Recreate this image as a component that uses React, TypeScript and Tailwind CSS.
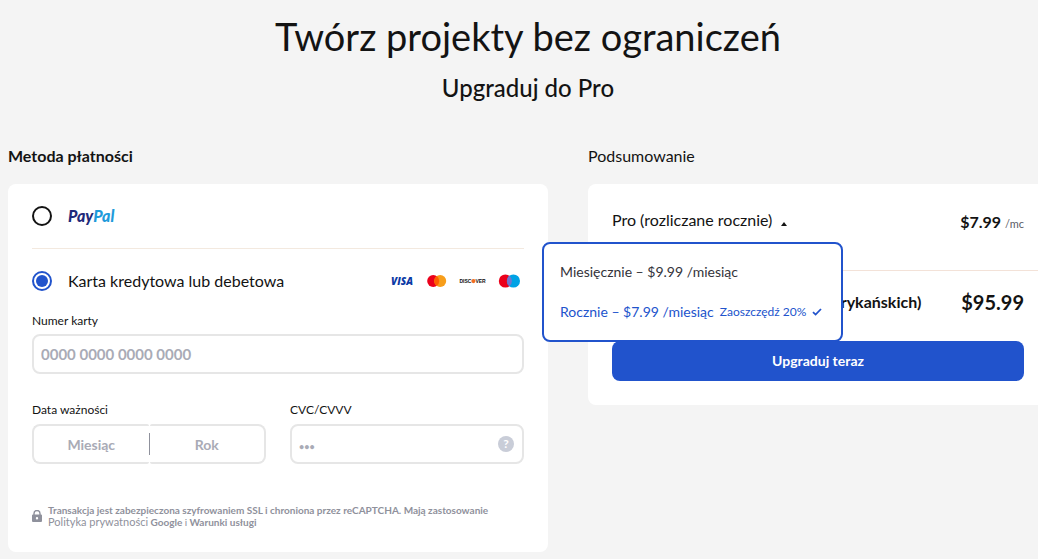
import React, { useState } from 'react';
import clsx from 'clsx';

type PlanId = 'monthly' | 'yearly';

interface Plan {
  id: PlanId;
  label: string;
  summary: string;
  price: string;
  total: string;
  saving?: string;
}

const PLANS: Plan[] = [
  { id: 'monthly', label: 'Miesięcznie – $9.99 /miesiąc', summary: 'Pro (rozliczane miesięcznie)', price: '$9.99', total: '$9.99' },
  { id: 'yearly', label: 'Rocznie – $7.99 /miesiąc', summary: 'Pro (rozliczane rocznie)', price: '$7.99', total: '$95.99', saving: 'Zaoszczędź 20%' },
];

const fieldClass =
  'h-10 w-full min-w-0 border-2 border-[#e6e6e6] bg-white font-bold text-[#131313] outline-none placeholder:text-[#a9abb6] placeholder:opacity-100 focus:border-[#2153cc]';
const radioClass =
  'grid size-5 shrink-0 appearance-none place-content-center rounded-full border-2 border-[#131313] bg-white checked:border-[#2153cc] checked:before:size-3 checked:before:rounded-full checked:before:bg-[#2153cc]';

const CardLogos = () => (
  <div className="flex items-center gap-3">
    <svg width="24" height="14" viewBox="0 0 24 14" role="img" aria-label="Visa">
      <text x="0" y="11" fontFamily="Open Sans, sans-serif" fontWeight="800" fontStyle="italic" fontSize="10" fill="#0b3aa5">VISA</text>
    </svg>
    <svg width="20" height="14" viewBox="0 0 20 14" role="img" aria-label="Mastercard">
      <circle cx="6.2" cy="7" r="6" fill="#eb001b" />
      <circle cx="13.2" cy="7" r="6" fill="#f79e1b" />
      <path d="M9.7 2.1a6 6 0 0 1 0 9.8a6 6 0 0 1 0-9.8z" fill="#ff5f00" />
    </svg>
    <svg width="27" height="14" viewBox="0 0 27 14" role="img" aria-label="Discover">
      <text x="0.5" y="9" fontFamily="Liberation Sans, sans-serif" fontWeight="700" fontSize="5" fill="#111">DISC</text>
      <circle cx="14.4" cy="7.1" r="2.1" fill="#f26e21" />
      <text x="16.4" y="9" fontFamily="Liberation Sans, sans-serif" fontWeight="700" fontSize="5" fill="#111">VER</text>
    </svg>
    <svg width="22" height="14" viewBox="0 0 22 14" role="img" aria-label="Maestro">
      <circle cx="7.4" cy="7" r="6.600" fill="#eb001b" />
      <circle cx="15.4" cy="7" r="6.600" fill="#00a2e5" />
      <path d="M11.4 1.800a6.600 6.600 0 0 1 0 10.400a6.600 6.600 0 0 1 0-10.400z" fill="#7375cf" />
    </svg>
  </div>
);

const PaymentMethod = () => {
  const [method, setMethod] = useState<'paypal' | 'card'>('card');

  return (
    <div className="rounded-lg bg-white px-6 pt-5 pb-6">
      <label className="flex h-6 items-center gap-4">
        <input type="radio" name="method" className={radioClass} checked={method === 'paypal'} onChange={() => setMethod('paypal')} />
        <span className="text-base font-black text-[#1f2a7a] italic">
          Pay<span className="text-[#1f9bdb]">Pal</span>
        </span>
      </label>

      <div className="mt-5 flex items-center justify-between border-t border-[#f3e9df] pt-5 pr-1">
        <label className="flex h-6 items-center gap-4 text-base">
          <input type="radio" name="method" className={radioClass} checked={method === 'card'} onChange={() => setMethod('card')} />
          Karta kredytowa lub debetowa
        </label>
        <CardLogos />
      </div>

      <label htmlFor="card-number" className="mt-4 block text-xs leading-6">Numer karty</label>
      <input id="card-number" className={clsx(fieldClass, 'mt-px rounded-lg px-[7px] text-[15px]')} placeholder="0000 0000 0000 0000" />

      <div className="mt-6 grid grid-cols-2 gap-6">
        <fieldset>
          <legend className="text-xs leading-6">Data ważności</legend>
          <div className="mt-0.5 flex items-center">
            <input aria-label="Miesiąc" className={clsx(fieldClass, 'rounded-l-lg rounded-r-xs border-r-0 text-center text-sm')} placeholder="Miesiąc" />
            <span className="h-[22px] w-px shrink-0 bg-[#8f919c]" />
            <input aria-label="Rok" className={clsx(fieldClass, 'rounded-l-xs rounded-r-lg border-l-0 text-center text-sm')} placeholder="Rok" />
          </div>
        </fieldset>
        <div>
          <label htmlFor="cvc" className="block text-xs leading-6">CVC/CVVV</label>
          <div className="relative mt-0.5">
            <input id="cvc" className={clsx(fieldClass, 'rounded-lg px-[7px] text-sm placeholder:text-[9px]')} placeholder="•••" />
            <button type="button" aria-label="Pomoc CVC" className="absolute inset-y-3 right-[10px] size-4 rounded-full bg-[#c9cdd8] text-xs leading-4 font-bold text-white">
              ?
            </button>
          </div>
        </div>
      </div>

      <div className="mt-10 flex items-center gap-[6px] text-[10px] leading-3 font-bold text-[#8f919c]">
        <svg width="10" height="12" viewBox="0 0 10 12" className="shrink-0" aria-hidden="true">
          <path d="M2 5V3.500a3 3 0 0 1 6 0V5" fill="none" stroke="#8f919c" strokeWidth="1.400" />
          <path fillRule="evenodd" d="M1 4.600h8a1 1 0 0 1 1 1V11a1 1 0 0 1-1 1H1a1 1 0 0 1-1-1V5.600a1 1 0 0 1 1-1zM5 7a1.200 1.200 0 1 0 0 2.400A1.200 1.200 0 0 0 5 7z" fill="#8f919c" />
        </svg>
        <p>
          Transakcja jest zabezpieczona szyfrowaniem SSL i chroniona przez reCAPTCHA. Mają zastosowanie{' '}
          <a href="#privacy" className="text-[11px] font-normal">Polityka prywatności</a> Google <span className="font-normal">i</span>{' '}
          <a href="#terms">Warunki usługi</a>
        </p>
      </div>
    </div>
  );
};

const Summary = () => {
  const [planId, setPlanId] = useState<PlanId>('yearly');
  const [open, setOpen] = useState(true);
  const plan = PLANS.find((p) => p.id === planId)!;

  return (
    <div className="rounded-lg bg-white p-6">
      <div className="relative flex h-[62px] items-start justify-between">
        <button type="button" aria-expanded={open} className="flex items-baseline gap-[9px] text-base leading-6" onClick={() => setOpen(!open)}>
          {plan.summary}
          <svg width="6" height="4" viewBox="0 0 6 4" className={clsx(!open && 'rotate-180')} aria-hidden="true">
            <path d="M3 0l3 4H0z" fill="#131313" />
          </svg>
        </button>
        <p className="text-base leading-7 font-bold">
          {plan.price} <span className="text-[11px] font-normal text-[#5c5c66]">/mc</span>
        </p>

        {/* Plan menu */}
        {open && (
          <div role="listbox" aria-label="Plan" className="absolute top-[34px] -left-[70px] z-10 flex w-[301px] flex-col rounded-lg border-2 border-[#2153cc] bg-white py-2">
            {PLANS.map((p) => (
              <button
                key={p.id}
                type="button"
                role="option"
                aria-selected={p.id === planId}
                className={clsx('flex h-10 items-center px-4 text-sm whitespace-nowrap', p.id === planId ? 'text-[#2153cc]' : 'text-[#33333a]')}
                onClick={() => {
                  setPlanId(p.id);
                  setOpen(false);
                }}
              >
                {p.label}
                {p.saving && <span className="ml-[6px] text-xs">{p.saving}</span>}
                {p.id === planId && (
                  <svg width="10" height="8" viewBox="0 0 10 8" className="ml-[6px]" aria-hidden="true">
                    <path d="M1 4.200l2.600 2.400L9 1" fill="none" stroke="#2153cc" strokeWidth="1.800" />
                  </svg>
                )}
              </button>
            ))}
          </div>
        )}
      </div>

      <div className="-mr-6 border-t border-[#f3e2d8]" />
      <div className="flex h-[70px] items-center justify-between pb-2">
        <p className="text-base font-bold">Cena całkowita (w dolarach amerykańskich)</p>
        <p className="text-xl font-bold">{plan.total}</p>
      </div>
      <button type="button" className="h-10 w-full rounded-lg bg-[#2153cc] text-sm font-bold text-white">Upgraduj teraz</button>
    </div>
  );
};

export default function App() {
  return (
    <div className="min-h-screen overflow-x-clip bg-[#f4f4f4] pb-2 font-['Lato',sans-serif] text-[#131313]">
      <main className="-mr-[10px] ml-2">
        <header className="pt-3 text-center">
          <h1 className="text-[38px] leading-12">Twórz projekty bez ograniczeń</h1>
          <p className="mt-3 text-2xl leading-8 font-medium">Upgraduj do Pro</p>
        </header>

        <div className="mt-10 grid grid-cols-[540fr_460fr] items-start gap-10">
          <section>
            <h2 className="mb-4 text-base leading-6 font-bold">Metoda płatności</h2>
            <PaymentMethod />
          </section>
          <section>
            <h2 className="mb-4 text-base leading-6">Podsumowanie</h2>
            <Summary />
          </section>
        </div>
      </main>
    </div>
  );
}
